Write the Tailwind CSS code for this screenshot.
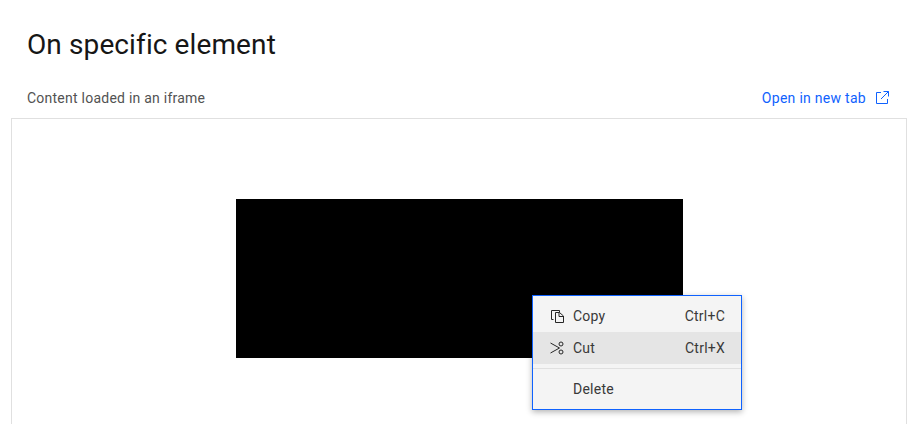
<!DOCTYPE html>
<html lang="en">
<head>
    <meta charset="UTF-8">
    <title>On specific element</title>
    <script src="https://cdn.jsdelivr.net/npm/@tailwindcss/browser@4"></script>
</head>
<body class="bg-white h-[424px] overflow-hidden font-['Roboto',sans-serif] text-[#161616]">
    <h1 class="pl-[27px] pt-[27px] text-[28px] leading-[36px] tracking-[0.11px] font-normal">On specific element</h1>
    <div class="flex items-center justify-between pl-[27px] pr-[34px] pt-[15px] h-[55px]">
        <span class="text-[14px] tracking-[0.24px] text-[#525252]">Content loaded in an iframe</span>
        <a href="#" class="flex items-center gap-[8px] text-[14px] tracking-[0.28px] text-[#0f62fe]">
            Open in new tab
            <svg class="w-4 h-4" viewBox="0 0 16 16" fill="none" stroke="currentColor" stroke-width="1">
                <path d="M13.5 9v4.5h-11v-11H7M9.5 1.5h5v5M14.5 1.5L7 9"/>
            </svg>
        </a>
    </div>
    <!-- iframe area -->
    <div class="relative mx-[11px] w-[896px] h-[320px] border border-[#e0e0e0] border-b-0">
        <div class="ml-[224px] mt-[80px] w-[447px] h-[159px] bg-black"></div>
        <!-- context menu -->
        <div class="absolute left-[520px] top-[176px] w-[210px] h-[115px] bg-[#f4f4f4] border border-[#0f62fe] shadow-[0_2px_6px_rgba(0,0,0,0.3)] pt-[4px] text-[14px] tracking-[0.24px] text-[#393939]">
            <div class="flex items-center justify-between h-[32px] px-[16px]">
                <span class="flex items-center gap-[8px]">
                    <svg class="w-4 h-4 text-[#262626]" viewBox="0 0 16 16" fill="none" stroke="currentColor" stroke-width="1">
                        <path d="M4.5 11.5h-2v-9h8v2M6.5 4.5h4l4 3.5v6.5h-8zM10 4.5v4h4.5"/>
                    </svg>
                    Copy
                </span>
                <span>Ctrl+C</span>
            </div>
            <div class="flex items-center justify-between h-[32px] px-[16px] bg-[#e5e5e5]">
                <span class="flex items-center gap-[8px]">
                    <svg class="w-4 h-4 text-[#262626]" viewBox="0 0 16 16" fill="none" stroke="currentColor" stroke-width="1">
                        <path d="M1.5 3l9 5-9 5"/>
                        <circle cx="12" cy="4" r="2"/>
                        <circle cx="12" cy="12" r="2"/>
                    </svg>
                    Cut
                </span>
                <span>Ctrl+X</span>
            </div>
            <div class="h-px bg-[#e0e0e0] mt-[4px]"></div>
            <div class="flex items-center h-[32px] mt-[4px] pl-[40px]">Delete</div>
        </div>
    </div>
</body>
</html>
